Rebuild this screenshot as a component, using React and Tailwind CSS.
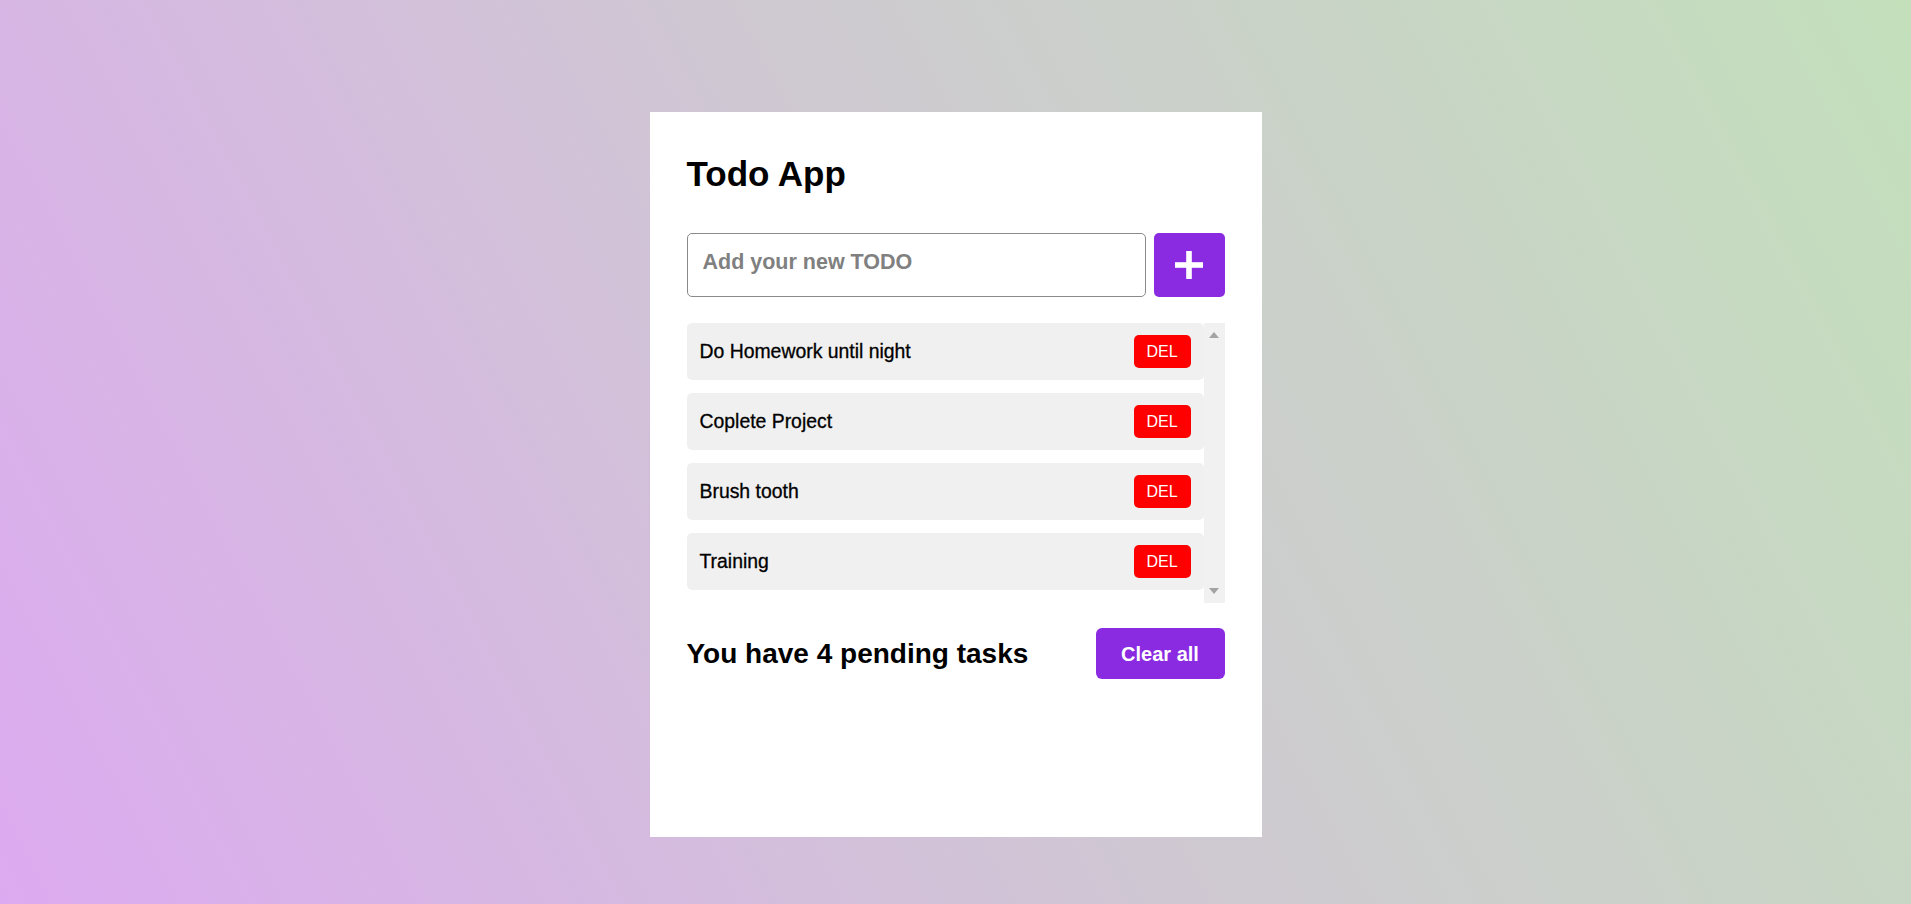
import React from "react";

const todos = ["Do Homework until night", "Coplete Project", "Brush tooth", "Training"];

function PlusIcon() {
  return (
    <svg width="28" height="28" viewBox="0 0 28 28" aria-hidden="true">
      <rect x="11.2" y="0" width="5.6" height="28" fill="#ffffff" />
      <rect x="0" y="11.2" width="28" height="5.6" fill="#ffffff" />
    </svg>
  );
}

function FakeScrollbar() {
  return (
    <div className="flex w-[21px] flex-col items-center justify-between bg-[#f1f1f1] py-[9px]">
      <svg width="10" height="6" viewBox="0 0 10 6" aria-hidden="true">
        <polygon points="5,0 10,6 0,6" fill="#a3a3a3" />
      </svg>
      <svg width="10" height="6" viewBox="0 0 10 6" aria-hidden="true">
        <polygon points="0,0 10,0 5,6" fill="#a3a3a3" />
      </svg>
    </div>
  );
}

export default function App() {
  return (
    <div
      className="flex min-h-[904px] w-full justify-center bg-[linear-gradient(62deg,#dcaaf0_0%,#cfc8d2_50%,#c3e0bb_100%)] pt-[112px]"
      style={{ fontFamily: '"Liberation Sans", Arial, sans-serif' }}
    >
      <div className="flex h-[725px] w-[612px] flex-col bg-white px-[37px] pt-[42px]">
        <h1 className="text-[35px] font-bold leading-[40px] text-black">Todo App</h1>

        <div className="mt-[39px] flex h-[64px] gap-[8px]">
          <input
            type="text"
            placeholder="Add your new TODO"
            className="h-full flex-1 rounded-[5px] border border-[#8a8a8a] bg-white px-[15px] pb-[5px] text-[21.5px] font-bold text-black outline-none placeholder:text-[#808080]"
          />
          <button className="flex h-full w-[71px] items-center justify-center rounded-[5px] bg-[#8a2be2]">
            <PlusIcon />
          </button>
        </div>

        <div className="mt-[26px] flex h-[280px]">
          <ul className="flex flex-1 flex-col gap-[13px]">
            {todos.map((t) => (
              <li
                key={t}
                className="flex h-[57px] items-center justify-between rounded-[5px] bg-[#f0f0f0] pl-[13px] pr-[13px]"
              >
                <span className="text-[19.4px] leading-none text-black [-webkit-text-stroke:0.3px_#000]">{t}</span>
                <button className="flex h-[33px] w-[57px] items-center justify-center rounded-[5px] bg-[#ff0000] text-[16px] leading-none text-white">
                  DEL
                </button>
              </li>
            ))}
          </ul>
          <FakeScrollbar />
        </div>

        <div className="mt-[25px] flex h-[51px] items-center justify-between">
          <span className="text-[28px] font-bold leading-none text-black">You have 4 pending tasks</span>
          <button className="flex h-[51px] w-[129px] items-center justify-center rounded-[6px] bg-[#8a2be2] text-[20px] font-bold leading-none text-white">
            Clear all
          </button>
        </div>
      </div>
    </div>
  );
}
